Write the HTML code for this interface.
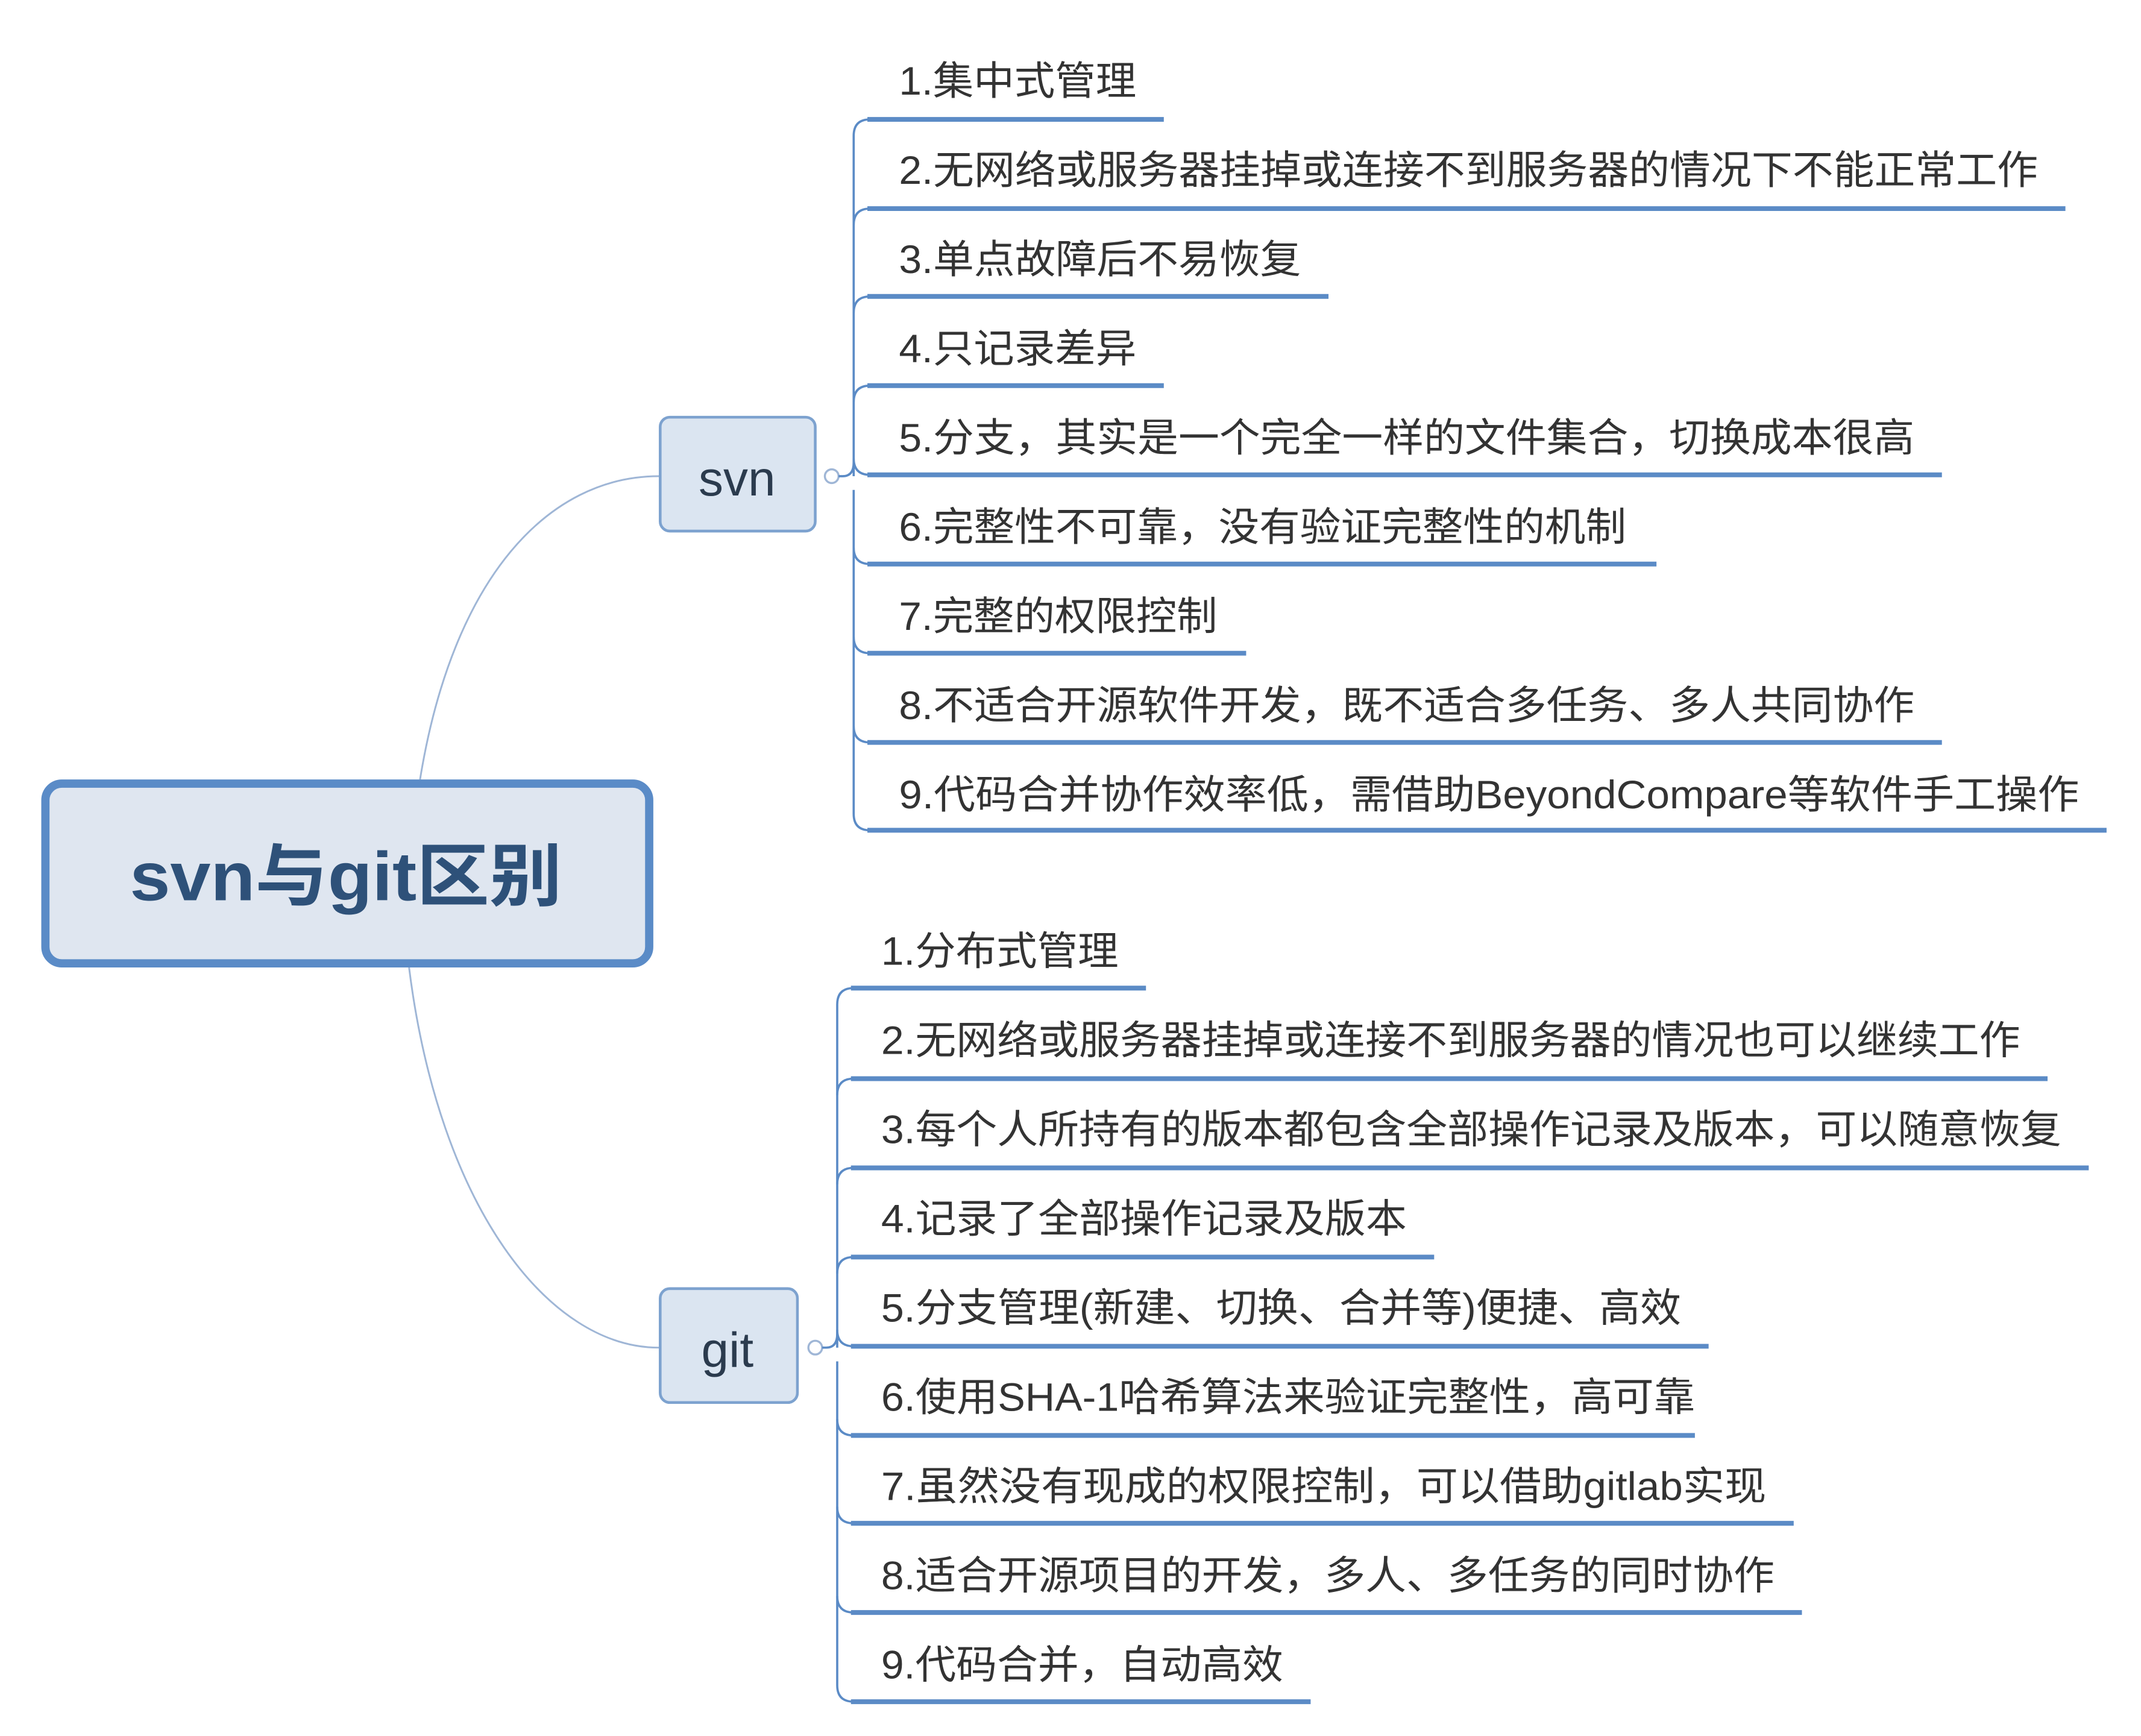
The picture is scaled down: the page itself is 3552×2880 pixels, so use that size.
<!DOCTYPE html>
<html><head><meta charset="utf-8"><style>
html,body{margin:0;padding:0;background:#fff;width:3552px;height:2880px;overflow:hidden}
svg{display:block}
text{font-family:"Liberation Sans","Noto Sans CJK SC",sans-serif}
</style></head><body>
<svg width="3552" height="2880" viewBox="0 0 1560 1265" xmlns="http://www.w3.org/2000/svg">
<rect width="1560" height="1265" fill="#fff"/>
<!-- root curves -->
<path d="M306 568 C330 420 400 347 480 347" fill="none" stroke="#9fb6d6" stroke-width="1.3"/>
<path d="M298 705 C320 880 400 982 480 982" fill="none" stroke="#9fb6d6" stroke-width="1.3"/>
<!-- root -->
<rect x="33" y="571" width="440" height="131" rx="12" fill="#dfe6f0" stroke="#5a8bc7" stroke-width="6"/>
<text x="252" y="656" text-anchor="middle" font-size="50" font-weight="bold" fill="#2e5179" textLength="315" lengthAdjust="spacingAndGlyphs">svn与git区别</text>
<!-- svn -->
<rect x="481" y="304" width="113" height="83" rx="7" fill="#dbe5f1" stroke="#7da2cf" stroke-width="2"/>
<text x="537" y="361" text-anchor="middle" font-size="36" fill="#2b3b4e">svn</text>
<circle cx="606" cy="347" r="5" fill="#fff" stroke="#9fb6d6" stroke-width="1.5"/>
<!-- git -->
<rect x="481" y="939" width="100" height="83" rx="7" fill="#dbe5f1" stroke="#7da2cf" stroke-width="2"/>
<text x="530" y="996" text-anchor="middle" font-size="36" fill="#2b3b4e">git</text>
<circle cx="594" cy="982" r="5" fill="#fff" stroke="#9fb6d6" stroke-width="1.5"/>
<g fill="none" stroke="#5b8bc6" stroke-width="1.6">
<path d="M611 347 L614 347 Q622 347 622 337 L622 99 Q622 87 634 87"/>
<path d="M622 164 Q622 152 634 152"/>
<path d="M622 228 Q622 216 634 216"/>
<path d="M622 293 Q622 281 634 281"/>
<path d="M622 347 L622 334 Q622 346 634 346"/>
<path d="M622 357 L622 399 Q622 411 634 411"/>
<path d="M622 399 L622 464 Q622 476 634 476"/>
<path d="M622 464 L622 529 Q622 541 634 541"/>
<path d="M622 529 L622 593 Q622 605 634 605"/>
<path d="M599 982 L602 982 Q610 982 610 972 L610 732 Q610 720 622 720"/>
<path d="M610 798 Q610 786 622 786"/>
<path d="M610 863 Q610 851 622 851"/>
<path d="M610 928 Q610 916 622 916"/>
<path d="M610 982 L610 969 Q610 981 622 981"/>
<path d="M610 992 L610 1034 Q610 1046 622 1046"/>
<path d="M610 1034 L610 1098 Q610 1110 622 1110"/>
<path d="M610 1098 L610 1163 Q610 1175 622 1175"/>
<path d="M610 1163 L610 1228 Q610 1240 622 1240"/>
</g>
<g stroke="#5b8bc6" stroke-width="3.5">
<line x1="632" y1="87" x2="848" y2="87"/>
<line x1="632" y1="152" x2="1505" y2="152"/>
<line x1="632" y1="216" x2="968" y2="216"/>
<line x1="632" y1="281" x2="848" y2="281"/>
<line x1="632" y1="346" x2="1415" y2="346"/>
<line x1="632" y1="411" x2="1207" y2="411"/>
<line x1="632" y1="476" x2="908" y2="476"/>
<line x1="632" y1="541" x2="1415" y2="541"/>
<line x1="632" y1="605" x2="1535" y2="605"/>
<line x1="620" y1="720" x2="835" y2="720"/>
<line x1="620" y1="786" x2="1492" y2="786"/>
<line x1="620" y1="851" x2="1522" y2="851"/>
<line x1="620" y1="916" x2="1045" y2="916"/>
<line x1="620" y1="981" x2="1245" y2="981"/>
<line x1="620" y1="1046" x2="1235" y2="1046"/>
<line x1="620" y1="1110" x2="1307" y2="1110"/>
<line x1="620" y1="1175" x2="1313" y2="1175"/>
<line x1="620" y1="1240" x2="955" y2="1240"/>
</g>
<g font-size="29" fill="#333" lengthAdjust="spacingAndGlyphs">
<text x="655" y="69" textLength="173" lengthAdjust="spacingAndGlyphs">1.集中式管理</text>
<text x="655" y="134" textLength="830" lengthAdjust="spacingAndGlyphs">2.无网络或服务器挂掉或连接不到服务器的情况下不能正常工作</text>
<text x="655" y="199" textLength="293" lengthAdjust="spacingAndGlyphs">3.单点故障后不易恢复</text>
<text x="655" y="264" textLength="173" lengthAdjust="spacingAndGlyphs">4.只记录差异</text>
<text x="655" y="329" textLength="740" lengthAdjust="spacingAndGlyphs">5.分支，其实是一个完全一样的文件集合，切换成本很高</text>
<text x="655" y="394" textLength="530" lengthAdjust="spacingAndGlyphs">6.完整性不可靠，没有验证完整性的机制</text>
<text x="655" y="459" textLength="232" lengthAdjust="spacingAndGlyphs">7.完整的权限控制</text>
<text x="655" y="524" textLength="740" lengthAdjust="spacingAndGlyphs">8.不适合开源软件开发，既不适合多任务、多人共同协作</text>
<text x="655" y="589" textLength="860" lengthAdjust="spacingAndGlyphs">9.代码合并协作效率低，需借助BeyondCompare等软件手工操作</text>
<text x="642" y="703" textLength="173" lengthAdjust="spacingAndGlyphs">1.分布式管理</text>
<text x="642" y="768" textLength="830" lengthAdjust="spacingAndGlyphs">2.无网络或服务器挂掉或连接不到服务器的情况也可以继续工作</text>
<text x="642" y="833" textLength="860" lengthAdjust="spacingAndGlyphs">3.每个人所持有的版本都包含全部操作记录及版本，可以随意恢复</text>
<text x="642" y="898" textLength="383" lengthAdjust="spacingAndGlyphs">4.记录了全部操作记录及版本</text>
<text x="642" y="963" textLength="583" lengthAdjust="spacingAndGlyphs">5.分支管理(新建、切换、合并等)便捷、高效</text>
<text x="642" y="1028" textLength="593" lengthAdjust="spacingAndGlyphs">6.使用SHA-1哈希算法来验证完整性，高可靠</text>
<text x="642" y="1093" textLength="645" lengthAdjust="spacingAndGlyphs">7.虽然没有现成的权限控制，可以借助gitlab实现</text>
<text x="642" y="1158" textLength="651" lengthAdjust="spacingAndGlyphs">8.适合开源项目的开发，多人、多任务的同时协作</text>
<text x="642" y="1223" textLength="293" lengthAdjust="spacingAndGlyphs">9.代码合并，自动高效</text>
</g>
</svg>
</body></html>
